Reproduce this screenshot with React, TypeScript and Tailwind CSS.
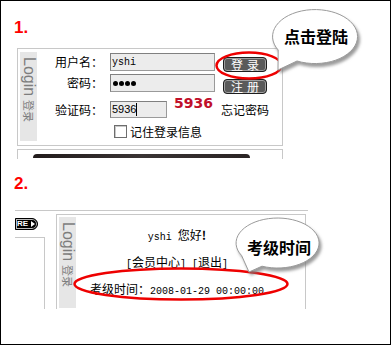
import React from 'react';

// small helper for the half-width latin bits (SimSun-like 6px cells)
const M = ({ children }: { children: React.ReactNode }) => (
  <span className="font-['Liberation_Mono',monospace] text-[10px]">{children}</span>
);

const LoginStrip = ({ h }: { h: string }) => (
  <div className={`w-[17px] ${h} bg-[#e6e6e6] flex justify-center pt-[5px] shrink-0`}>
    <div className="[writing-mode:vertical-rl] [text-orientation:sideways] text-[#7d7d7d] whitespace-nowrap leading-[16px]">
      <span className="font-['Liberation_Sans',sans-serif] text-[16px]">Login</span>
      <span className="font-['Noto_Sans_CJK_SC',sans-serif] text-[11px] mt-[4px]">登录</span>
    </div>
  </div>
);

const Field = ({ w, h = 'h-[18px]', children }: { w: string; h?: string; children?: React.ReactNode }) => (
  <div className={`${w} ${h} bg-[#ececec] border border-[#9a9a9a] border-t-[#808080] border-l-[#808080] flex items-center pl-[1px] shrink-0`}>
    {children}
  </div>
);

const Btn = ({ label, mt }: { label: string; mt: string }) => (
  <div className={`${mt} w-[44px] h-[15px] rounded-[4px] bg-[#5a5a5a] border border-[#1e1e1e] shadow-[inset_0_0_0_1px_#a0a0a0] text-white text-[12px] leading-[13px] flex items-center justify-center tracking-[4px] pl-[4px] shrink-0`}>
    {label}
  </div>
);

export default function App() {
  return (
    <div className="w-[391px] h-[345px] border border-black bg-white overflow-hidden relative font-['Noto_Sans_CJK_SC',sans-serif] text-[12px] text-black">
      {/* step 1 */}
      <div className="ml-[13px] mt-[17px] h-[20px] leading-[20px] font-['Liberation_Sans',sans-serif] text-[17px] font-bold text-[#ff0000]">1.</div>

      <div className="ml-[16px] mt-[10px] w-[266px] h-[98px] border border-[#c8c8c8] flex pt-[3px] pl-[2px]">
        <LoginStrip h="h-[89px]" />
        <div className="flex flex-col">
          <div className="mt-[1px] h-[18px] flex items-start">
            <div className="w-[66px] h-[18px] leading-[18px] text-right shrink-0">用户名：</div>
            <div className="ml-[7px]">
              <Field w="w-[105px]"><M>yshi</M></Field>
            </div>
            <div className="ml-[8px]"><Btn label="登录" mt="mt-[4px]" /></div>
          </div>

          <div className="mt-[3px] h-[18px] flex items-start">
            <div className="w-[66px] h-[18px] leading-[18px] text-right shrink-0">密码：</div>
            <div className="ml-[7px]">
              <Field w="w-[105px]">
                <div className="flex gap-[1px] pl-[1px]">
                  <span className="w-[5px] h-[5px] rounded-full bg-black" />
                  <span className="w-[5px] h-[5px] rounded-full bg-black" />
                  <span className="w-[5px] h-[5px] rounded-full bg-black" />
                  <span className="w-[5px] h-[5px] rounded-full bg-black" />
                </div>
              </Field>
            </div>
            <div className="ml-[8px]"><Btn label="注册" mt="mt-[5px]" /></div>
          </div>

          <div className="mt-[9px] h-[17px] flex items-center">
            <div className="w-[66px] h-[17px] leading-[17px] text-right shrink-0">验证码：</div>
            <div className="ml-[7px]">
              <Field w="w-[57px]" h="h-[17px]">
                <span className="font-['Liberation_Sans',sans-serif] text-[11px] leading-[13px]">5936</span>
                <span className="w-[1px] h-[13px] bg-black" />
              </Field>
            </div>
            <div className="ml-[7px] w-[47px] self-start mt-[-5px] leading-[14px] font-['DejaVu_Sans',sans-serif] text-[14px] font-bold text-[#c0102a] shrink-0">5936</div>
            <div className="leading-[17px] whitespace-nowrap">忘记密码</div>
          </div>

          <div className="mt-[7px] h-[13px] flex items-center">
            <div className="ml-[77px] w-[13px] h-[13px] bg-white border border-[#6e6e6e] shadow-[inset_1px_1px_0_#c8c8c8] shrink-0" />
            <div className="ml-[3px] leading-[13px] whitespace-nowrap">记住登录信息</div>
          </div>
        </div>
      </div>

      {/* start of the next box, cut off */}
      <div className="ml-[16px] mt-[3px] w-[266px] h-[10px] border-t border-x border-[#c8c8c8]">
        <div className="ml-[15px] mt-[4px] w-[217px] h-[4px] rounded-t-[10px] bg-gradient-to-r from-[#221c1c] via-[#3a3434] to-[#2a2424]" />
      </div>

      {/* step 2 */}
      <div className="ml-[13px] mt-[15px] h-[20px] leading-[20px] font-['Liberation_Sans',sans-serif] text-[17px] font-bold text-[#ff0000]">2.</div>

      <div className="ml-[14px] mt-[16px] w-[293px] border-t border-[#c8c8c8] flex">
        <div className="w-[30px] flex flex-col shrink-0">
          <div className="mt-[7px] w-[23px] h-[12px] bg-black rounded-r-[6px] border border-black shadow-[inset_0_0_0_1px_#bdbdbd] flex items-center gap-[3px] pl-[1px] text-white font-['Liberation_Sans',sans-serif] text-[8px] font-bold leading-none">
            <span>RE</span>
            <span className="w-0 h-0 border-y-[3px] border-y-transparent border-l-[4px] border-l-white" />
          </div>
          <div className="mt-[7px] w-[30px] h-[72px] border-t border-r border-[#c8c8c8]" />
        </div>

        <div className="ml-[11px] mt-[3px] w-[250px] h-[95px] border-t border-x border-[#c8c8c8] flex pt-[2px] pl-[2px]">
          <LoginStrip h="h-[91px]" />
          <div className="w-[202px] pt-[6px] flex flex-col items-center leading-[24px] whitespace-nowrap">
            <div><M>yshi </M>您好<span className="font-bold">!</span></div>
            <div><M>[</M>会员中心<M>] [</M>退出<M>]</M></div>
            <div>考级时间：<M>2008-01-29 00:00:00</M></div>
          </div>
        </div>
      </div>

      {/* annotations */}
      <svg className="absolute left-0 top-0 pointer-events-none" width="391" height="345">
        <defs>
          <filter id="sh" x="-20%" y="-20%" width="150%" height="160%">
            <feDropShadow dx="2" dy="3" stdDeviation="1.8" floodColor="#7a7a7a" floodOpacity="0.75" />
          </filter>
        </defs>
        <ellipse cx="248" cy="64.5" rx="32.5" ry="13" fill="none" stroke="#ee0000" strokeWidth="2.5" />
        <ellipse cx="180" cy="283" rx="106.5" ry="15.5" fill="none" stroke="#ee0000" strokeWidth="2.5" />
        <path d="M 296 60 A 42.5 27 0 1 0 277.2 49 L 277 69 Z" fill="#fff" stroke="#9a9a9a" strokeWidth="1" filter="url(#sh)" />
        <path d="M 261 265.2 A 41.5 25 0 1 0 240.6 254.5 L 248 271 Z" fill="#fff" stroke="#9a9a9a" strokeWidth="1" filter="url(#sh)" />
      </svg>
      <div className="absolute left-[275px] top-[26px] w-[80px] h-[18px] leading-[18px] text-center text-[16px] font-bold">点击登陆</div>
      <div className="absolute left-[238px] top-[237px] w-[80px] h-[18px] leading-[18px] text-center text-[16px] font-bold">考级时间</div>
    </div>
  );
}
